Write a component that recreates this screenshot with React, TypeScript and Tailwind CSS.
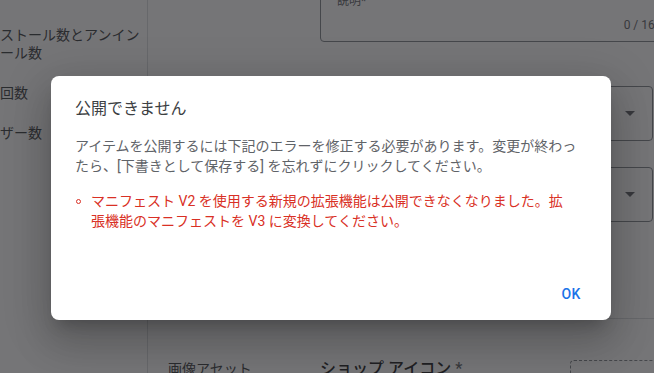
const font = "font-['Roboto','Noto_Sans_CJK_JP',sans-serif]";

function SelectBox() {
  return (
    <div className="h-[55px] w-[333px] rounded-[4px] border border-[#80868b] flex items-center justify-end pr-[17px]">
      <div className="w-0 h-0 border-l-[5px] border-r-[5px] border-t-[5px] border-l-transparent border-r-transparent border-t-[#5f6368]" />
    </div>
  );
}

export default function App() {
  return (
    <div className={`relative w-[654px] h-[373px] overflow-hidden bg-white ${font}`}>
      {/* page under the dialog */}
      <div className="flex h-full">
        <aside className="w-[148px] shrink-0 border-r border-[#dadce0] pt-[26px] flex flex-col gap-[22px] text-[14px] leading-[18px] text-[#3c4043]">
          <div>
            ストール数とアンイン
            <br />
            ール数
          </div>
          <div>回数</div>
          <div>ザー数</div>
        </aside>

        <main className="flex-1 flex flex-col">
          <div className="pl-[172px] h-[319px] border-b border-[#dadce0] shrink-0">
            <div className="-mt-[20px] h-[62px] w-[384px] rounded-[4px] border border-[#80868b] px-4 pt-[12px] pb-[8px] flex flex-col justify-between">
              <div className="text-[12px] leading-4 text-[#5f6368]">説明*</div>
              <div className="text-[12px] leading-4 text-[#5f6368] self-end pr-3">0 / 16000</div>
            </div>
            <div className="mt-[44px] flex flex-col gap-[26px]">
              <SelectBox />
              <SelectBox />
            </div>
          </div>

          <div className="flex items-start pt-[40px]">
            <div className="w-[172px] pl-5 text-[14px] leading-5 text-[#3c4043]">画像アセット</div>
            <div className="w-[250px] text-[16px] leading-5 font-medium text-[#202124]">
              ショップ アイコン <span className="text-[#5f6368]">*</span>
            </div>
            <div className="w-[120px] h-[60px] border border-dashed border-[#80868b] rounded-[4px] mt-[1px]" />
          </div>
        </main>
      </div>

      {/* scrim */}
      <div className="absolute inset-0 bg-[#202124]/[0.62]" />

      {/* dialog */}
      <div className="absolute left-[51px] top-[76px] w-[560px] h-[244px] bg-white rounded-[8px] shadow-[0_11px_15px_-7px_rgba(0,0,0,0.2),0_24px_38px_3px_rgba(0,0,0,0.14),0_9px_46px_8px_rgba(0,0,0,0.12)] flex flex-col">
        <div className="px-6 pt-[21px]">
          <h2 className="text-[16px] leading-6 text-[#3c4043]">公開できません</h2>
          <p className="mt-[15px] w-[510px] text-[14px] leading-5 text-[#5f6368]">
            アイテムを公開するには下記のエラーを修正する必要があります。変更が終わったら、[下書きとして保存する] を忘れずにクリックしてください。
          </p>
          <ul className="mt-[15px] text-[14px] leading-5 text-[#d93025]">
            <li className="flex">
              <span className="w-4 shrink-0 flex pt-[8px]">
                <span className="ml-[1px] w-[5px] h-[5px] rounded-full border border-[#d93025]" />
              </span>
              <span className="w-[482px]">
                マニフェスト V2 を使用する新規の拡張機能は公開できなくなりました。拡張機能のマニフェストを V3 に変換してください。
              </span>
            </li>
          </ul>
        </div>
        <div className="mt-auto flex justify-end pr-2 pb-2">
          <button className="h-9 min-w-16 px-2 rounded-[4px] text-[14px] font-medium text-[#1a73e8] tracking-[0.25px]">
            OK
          </button>
        </div>
      </div>
    </div>
  );
}
